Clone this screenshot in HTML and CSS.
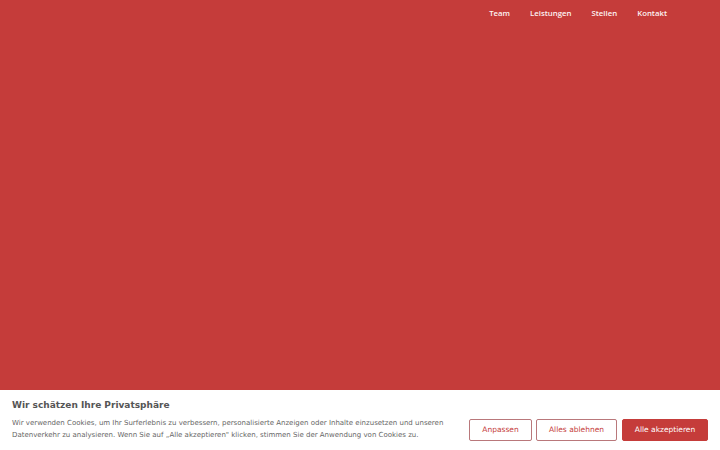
FILE: index.html
```html
<!DOCTYPE html>
<html lang="de">
<head>
<meta charset="utf-8">
<title>Praxis</title>
<link rel="stylesheet" href="styles.css">
</head>
<body>
<header class="site-header">
  <nav class="main-nav">
    <a href="#" class="nav-link">Team</a>
    <a href="#" class="nav-link">Leistungen</a>
    <a href="#" class="nav-link">Stellen</a>
    <a href="#" class="nav-link">Kontakt</a>
  </nav>
</header>
<main class="hero"></main>
<section class="cookie-banner">
  <h2 class="cookie-title">Wir schätzen Ihre Privatsphäre</h2>
  <div class="cookie-row">
    <p class="cookie-text">Wir verwenden Cookies, um Ihr Surferlebnis zu verbessern, personalisierte Anzeigen oder Inhalte einzusetzen und unseren Datenverkehr zu analysieren. Wenn Sie auf „Alle akzeptieren" klicken, stimmen Sie der Anwendung von Cookies zu.</p>
    <div class="cookie-actions">
      <button class="btn btn-outline btn-customize">Anpassen</button>
      <button class="btn btn-outline btn-reject">Alles ablehnen</button>
      <button class="btn btn-solid btn-accept">Alle akzeptieren</button>
    </div>
  </div>
</section>
</body>
</html>
```
FILE: styles.css
```css
html, body {
  margin: 0;
  padding: 0;
  height: 100%;
}
body {
  background: #c53c3a;
  font-family: "DejaVu Sans", sans-serif;
  display: flex;
  flex-direction: column;
  overflow: hidden;
}
.site-header {
  display: flex;
  justify-content: flex-end;
  padding: 0 53px 0 0;
  height: 25px;
  align-items: center;
}
.main-nav {
  display: flex;
  gap: 20px;
}
.nav-link {
  font-family: "Open Sans", sans-serif;
  font-size: 7.8px;
  font-weight: 600;
  color: #fdf3f3;
  text-decoration: none;
}
.hero {
  flex: 1;
}
.cookie-banner {
  background: #fff;
  height: 60px;
  padding: 9px 12px 0 12px;
  box-sizing: border-box;
  flex-shrink: 0;
}
.cookie-title {
  margin: 0;
  font-size: 9px;
  font-weight: bold;
  color: #555;
  line-height: 13px;
}
.cookie-row {
  display: flex;
  align-items: center;
  justify-content: space-between;
  margin-top: 5px;
}
.cookie-text {
  margin: 0;
  font-size: 7px;
  line-height: 12px;
  color: #666;
  width: 440px;
}
.cookie-actions {
  display: flex;
  gap: 4px;
  margin-top: 1px;
}
.btn {
  font-family: "DejaVu Sans", sans-serif;
  font-size: 7.5px;
  height: 22px;
  box-sizing: border-box;
  border-radius: 2px;
  padding: 0;
  cursor: pointer;
}
.btn-outline {
  background: #fff;
  color: #c53c3a;
  border: 1.5px solid #b9787b;
}
.btn-customize { width: 63px; }
.btn-reject { width: 81px; }
.btn-solid {
  background: #c53c3a;
  color: #fff;
  border: 1.5px solid #c53c3a;
  width: 86px;
  margin-left: 1px;
}
```
